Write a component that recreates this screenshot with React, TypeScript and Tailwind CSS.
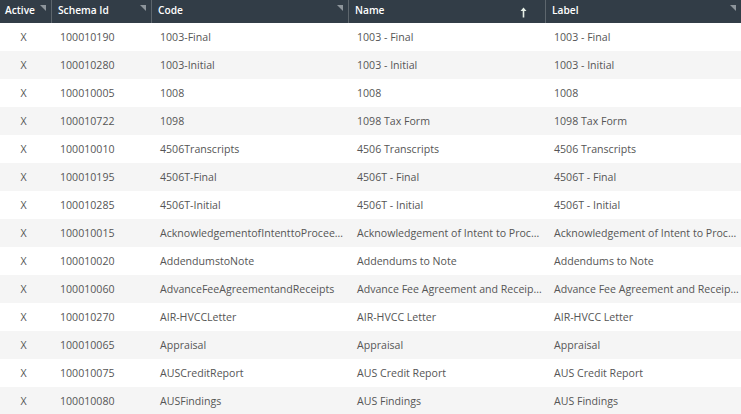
import React from 'react';

const rows = [
  ['100010190', '1003-Final', '1003 - Final'],
  ['100010280', '1003-Initial', '1003 - Initial'],
  ['100010005', '1008', '1008'],
  ['100010722', '1098', '1098 Tax Form'],
  ['100010010', '4506Transcripts', '4506 Transcripts'],
  ['100010195', '4506T-Final', '4506T - Final'],
  ['100010285', '4506T-Initial', '4506T - Initial'],
  ['100010015', 'AcknowledgementofIntenttoProceedwithLoan', 'Acknowledgement of Intent to Proceed with Loan'],
  ['100010020', 'AddendumstoNote', 'Addendums to Note'],
  ['100010060', 'AdvanceFeeAgreementandReceipts', 'Advance Fee Agreement and Receipts'],
  ['100010270', 'AIR-HVCCLetter', 'AIR-HVCC Letter'],
  ['100010065', 'Appraisal', 'Appraisal'],
  ['100010075', 'AUSCreditReport', 'AUS Credit Report'],
  ['100010080', 'AUSFindings', 'AUS Findings'],
];

const grid = 'grid grid-cols-[52px_100px_197px_197px_195px]';

function Corner() {
  return (
    <svg className="absolute right-[5px] top-[5px]" width="6" height="6" viewBox="0 0 6 6" aria-hidden="true">
      <path d="M0 0H6V6Z" fill="#8d959b" />
    </svg>
  );
}

function HeaderCell({ label, sorted, last, tight }: { label: string; sorted?: boolean; last?: boolean; tight?: boolean }) {
  return (
    <div className={`relative flex items-center pb-[1px] text-[10.2px] font-semibold text-white ${tight ? 'pl-[5px]' : 'pl-[6px]'} ${last ? '' : 'border-r border-[#5d666d]'}`}>
      {label}
      {sorted ? (
        <svg className="absolute right-[18px] top-[7px]" width="7" height="11" viewBox="0 0 7 11" aria-hidden="true">
          <path d="M3.5 0.5L6.5 4H4.3V10.5H2.7V4H0.5Z" fill="#e6efe6" />
        </svg>
      ) : (
        <Corner />
      )}
    </div>
  );
}

export default function App() {
  return (
    <div className="h-[414px] w-[741px] overflow-hidden bg-white font-['Open_Sans','Noto_Sans',sans-serif] text-[10.6px] text-[#555]">
      <div className={`${grid} h-[23px] bg-[#323d47]`}>
        <HeaderCell label="Active" tight />
        <HeaderCell label="Schema Id" />
        <HeaderCell label="Code" />
        <HeaderCell label="Name" sorted />
        <HeaderCell label="Label" last />
      </div>
      {rows.map(([id, code, name], index) => (
        <div key={id} className={`${grid} h-[28px] items-center leading-[16px] ${index % 2 ? 'bg-[#f5f5f5]' : 'bg-white'}`}>
          <div className="pr-[5px] text-center">X</div>
          <div className="pl-[8px]">{id}</div>
          <div className="truncate pl-[8px] pr-[3px]">{code}</div>
          <div className="truncate pl-[8px] pr-[4px]">{name}</div>
          <div className="truncate pl-[8px] pr-[2px]">{name}</div>
        </div>
      ))}
    </div>
  );
}
